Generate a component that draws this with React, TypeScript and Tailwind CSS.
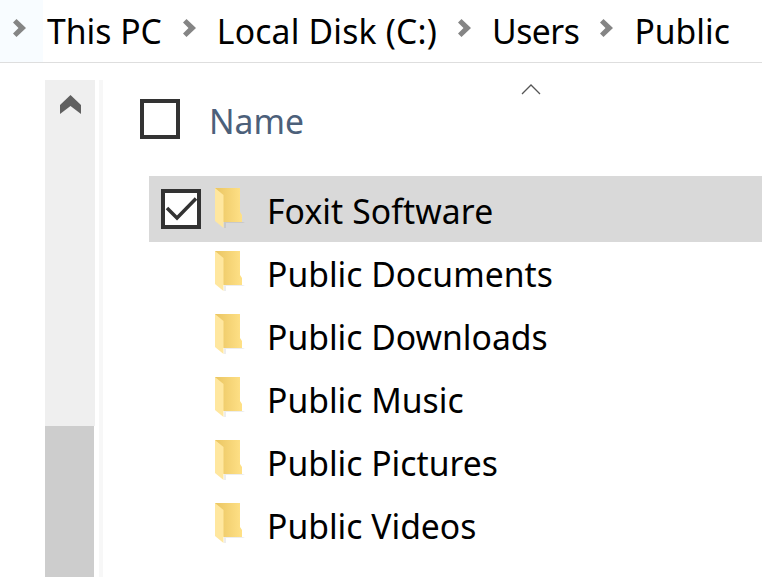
const crumbs = [
  { label: 'Local Disk (C:)', cls: 'tracking-[0.2px]' },
  { label: 'Users', cls: 'tracking-[-0.5px]' },
  { label: 'Public', cls: '' },
]

const folders = ['Public Documents', 'Public Downloads', 'Public Music', 'Public Pictures', 'Public Videos']

function Chevron() {
  return (
    <svg width="13" height="18" viewBox="0 0 13 18" className="shrink-0">
      <path d="M0 3.5L3.5 0l9.5 9-9.5 9L0 14.5 5.5 9z" fill="#858585" />
    </svg>
  )
}

function FolderIcon() {
  return (
    <svg width="32" height="41" viewBox="0 0 32 41" className="shrink-0">
      <defs>
        <linearGradient id="folderBack" x1="0" y1="0" x2="1" y2="0">
          <stop offset="0" stopColor="#eac562" />
          <stop offset="1" stopColor="#ffe187" />
        </linearGradient>
      </defs>
      <path d="M9 34h19l2 1H11v5H9z" fill="#000" fillOpacity="0.07" />
      <path d="M0 0h25v24l2 3v7H8.500L0 28z" fill="url(#folderBack)" />
      <path d="M0 0l8.500 7v33L0 33z" fill="#ffe79f" />
    </svg>
  )
}

function CheckBox({ checked }: { checked?: boolean }) {
  return (
    <div className="w-10 h-10 border-[4px] border-[#333333] bg-white shrink-0 flex items-center justify-center">
      {checked && (
        <svg width="32" height="32" viewBox="0 0 32 32">
          <path d="M2 15l10 10L31 5.500" fill="none" stroke="#333333" strokeWidth="3.5" />
        </svg>
      )}
    </div>
  )
}

export default function App() {
  return (
    <div className="w-[762px] h-[577px] overflow-hidden bg-white text-black font-['Noto_Sans',sans-serif]">
      {/* Breadcrumb */}
      <div className="h-[63px] flex border-b border-[#dedede]">
        <div className="w-[43px] h-full bg-[#f8fcff] flex items-center justify-center pb-[6px] pr-[4px]">
          <Chevron />
        </div>
        <div className="flex items-center text-[33.7px] leading-none whitespace-nowrap pl-[4px] pt-[1px]">
          <span>This PC</span>
          {crumbs.map(c => (
            <div key={c.label} className="flex items-center">
              <div className="mx-[21px] -mt-[7px]"><Chevron /></div>
              <span className={c.cls}>{c.label}</span>
            </div>
          ))}
        </div>
      </div>

      <div className="flex h-[514px] pt-[17px] pl-[45px]">
        {/* Scrollbar */}
        <div className="w-[50px] flex flex-col shrink-0">
          <div className="h-[346px] bg-[#efefef] flex justify-center pt-[15px]">
            <svg width="21" height="19" viewBox="0 0 21 19">
              <path d="M10.500 0L21 10v9l-10.500-8L0 19v-9z" fill="#606060" />
            </svg>
          </div>
          <div className="flex-1 bg-[#cdcdcd] mr-px" />
        </div>
        <div className="w-1 ml-1 bg-[#f7f7f7] shrink-0" />

        {/* File list */}
        <div className="flex-1 min-w-0 relative">
          <svg width="20" height="12" viewBox="0 0 20 12" className="absolute left-[418px] top-[3px]">
            <path d="M1 11l9-9 9 9" fill="none" stroke="#555555" strokeWidth="1.3" />
          </svg>
          <div className="flex items-center pl-[37px] pt-[19px]">
            <CheckBox />
            <span className="ml-[29px] h-10 text-[33.7px] leading-[44px] text-[#4c607a]">Name</span>
          </div>
          <div className="mt-[37px] ml-[46px] flex flex-col">
            <div className="h-[66px] bg-[#d9d9d9] flex items-center pl-[12px]">
              <CheckBox checked />
              <div className="ml-[14px] -mt-[2px]"><FolderIcon /></div>
              <span className="ml-[20px] text-[33.7px] leading-none pt-[5px] tracking-[0.1px]">Foxit Software</span>
            </div>
            {folders.map(name => (
              <div key={name} className="h-[63px] flex items-center pl-[66px]">
                <div className="-mt-[5px]"><FolderIcon /></div>
                <span className="ml-[20px] text-[33.7px] leading-none pt-[2px]">{name}</span>
              </div>
            ))}
          </div>
        </div>
      </div>
    </div>
  )
}
